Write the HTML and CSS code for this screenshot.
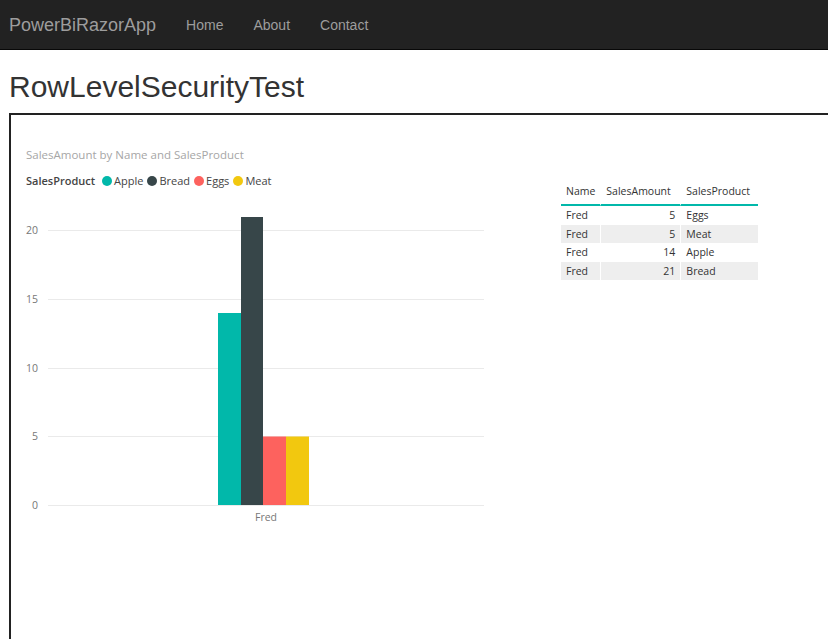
FILE: index.html
```html
<!DOCTYPE html>
<html>
<head>
<meta charset="utf-8">
<link rel="stylesheet" href="styles.css">
</head>
<body>
<nav class="navbar">
  <a class="brand">PowerBiRazorApp</a>
  <a class="nav-link">Home</a>
  <a class="nav-link">About</a>
  <a class="nav-link">Contact</a>
</nav>
<main class="content">
  <h2 class="page-title">RowLevelSecurityTest</h2>
  <div class="report-frame">
    <div class="report">
      <section class="chart-visual">
        <div class="chart-title">SalesAmount by Name and SalesProduct</div>
        <div class="legend">
          <span class="legend-title">SalesProduct</span>
          <span class="legend-item"><i class="dot apple"></i>Apple</span>
          <span class="legend-item"><i class="dot bread"></i>Bread</span>
          <span class="legend-item"><i class="dot eggs"></i>Eggs</span>
          <span class="legend-item"><i class="dot meat"></i>Meat</span>
        </div>
        <svg class="plot" width="490" height="340" viewBox="0 0 490 340">
          <g class="grid">
            <line x1="37" y1="30.5" x2="473" y2="30.5"/>
            <line x1="37" y1="99.5" x2="473" y2="99.5"/>
            <line x1="37" y1="168.5" x2="473" y2="168.5"/>
            <line x1="37" y1="236.5" x2="473" y2="236.5"/>
            <line x1="37" y1="305.5" x2="473" y2="305.5"/>
          </g>
          <g class="ylabels">
            <text x="27" y="34">20</text>
            <text x="27" y="103">15</text>
            <text x="27" y="172">10</text>
            <text x="27" y="240">5</text>
            <text x="27" y="309">0</text>
          </g>
          <rect x="207" y="113" width="23" height="192" fill="#01B8AA"/>
          <rect x="230" y="17" width="22" height="288" fill="#374649"/>
          <rect x="252" y="236.5" width="23" height="68.5" fill="#FD625E"/>
          <rect x="275" y="236.5" width="23" height="68.5" fill="#F2C80F"/>
          <text class="xlabel" x="255" y="321">Fred</text>
        </svg>
      </section>
      <section class="table-visual">
        <table class="data-table">
          <thead>
            <tr><th class="c-name">Name</th><th class="c-amt">SalesAmount</th><th class="c-prod">SalesProduct</th></tr>
          </thead>
          <tbody>
            <tr><td>Fred</td><td class="num">5</td><td>Eggs</td></tr>
            <tr class="alt"><td>Fred</td><td class="num">5</td><td>Meat</td></tr>
            <tr><td>Fred</td><td class="num">14</td><td>Apple</td></tr>
            <tr class="alt"><td>Fred</td><td class="num">21</td><td>Bread</td></tr>
          </tbody>
        </table>
      </section>
    </div>
  </div>
</main>
</body>
</html>
```
FILE: styles.css
```css
html, body {
  margin: 0;
  padding: 0;
  background: #fff;
  overflow: hidden;
}
body {
  font-family: "Liberation Sans", Arial, sans-serif;
  color: #333;
}
.navbar {
  height: 50px;
  background: #222;
  border-bottom: 1px solid #080808;
  box-sizing: border-box;
  display: flex;
  align-items: center;
  padding-left: 9px;
}
.brand {
  font-size: 18px;
  color: #9d9d9d;
  padding-right: 15px;
  line-height: 20px;
}
.nav-link {
  font-size: 14px;
  color: #9d9d9d;
  padding: 0 15px;
  line-height: 20px;
}
.content {
  padding-left: 9px;
}
.page-title {
  font-family: "Liberation Sans", Arial, sans-serif;
  font-weight: 500;
  font-size: 30px;
  line-height: 33px;
  margin: 20px 0 10px;
  color: #333;
}
.report-frame {
  border: 2px solid #222;
  border-right: none;
  border-bottom: none;
  height: 524px;
}
.report {
  display: flex;
  align-items: flex-start;
  font-family: "Open Sans", "Noto Sans", sans-serif;
}
.chart-visual {
  width: 490px;
  padding-top: 32px;
}
.chart-title {
  padding-left: 15px;
  font-size: 11.5px;
  color: #a6a6a6;
  line-height: 16px;
}
.legend {
  display: flex;
  align-items: center;
  padding-left: 15px;
  margin-top: 10px;
  font-size: 11px;
  line-height: 16px;
  color: #444;
}
.legend-title {
  font-weight: 600;
  color: #444;
  margin-right: 7px;
}
.legend-item {
  display: flex;
  align-items: center;
  margin-right: 4px;
}
.dot {
  display: inline-block;
  width: 10px;
  height: 10px;
  border-radius: 50%;
  margin-right: 2px;
}
.dot.apple { background: #01B8AA; }
.dot.bread { background: #374649; }
.dot.eggs { background: #FD625E; }
.dot.meat { background: #F2C80F; }
.plot {
  display: block;
  margin-top: 11px;
}
.grid line {
  stroke: #eaeaea;
  stroke-width: 1;
}
.ylabels text {
  font-family: "Open Sans", "Noto Sans", sans-serif;
  font-size: 10.5px;
  fill: #777;
  text-anchor: end;
}
.xlabel {
  font-family: "Open Sans", "Noto Sans", sans-serif;
  font-size: 10.5px;
  fill: #777;
  text-anchor: middle;
}
.table-visual {
  margin-left: 60px;
  margin-top: 66px;
}
.data-table {
  border-collapse: separate;
  border-spacing: 0;
  font-size: 10.5px;
  color: #333;
}
.data-table th {
  font-weight: 400;
  text-align: left;
  padding: 2px 5px 5px;
  height: 16px;
  border-bottom: 2px solid #01B8AA;
  border-right: 1px solid #fff;
  white-space: nowrap;
}
.data-table th:last-child { border-right: none; }
.data-table td {
  padding: 0 5px;
  height: 18.5px;
  line-height: 18.5px;
  border-right: 1px solid #fff;
  white-space: nowrap;
}
.data-table td:last-child { border-right: none; }
.data-table tr.alt td { background: #eeeeee; }
.data-table .c-name { width: 29px; }
.data-table .c-amt { width: 69px; text-align: left; }
.data-table .c-prod { width: 67px; }
.data-table td.num { text-align: right; }
```
